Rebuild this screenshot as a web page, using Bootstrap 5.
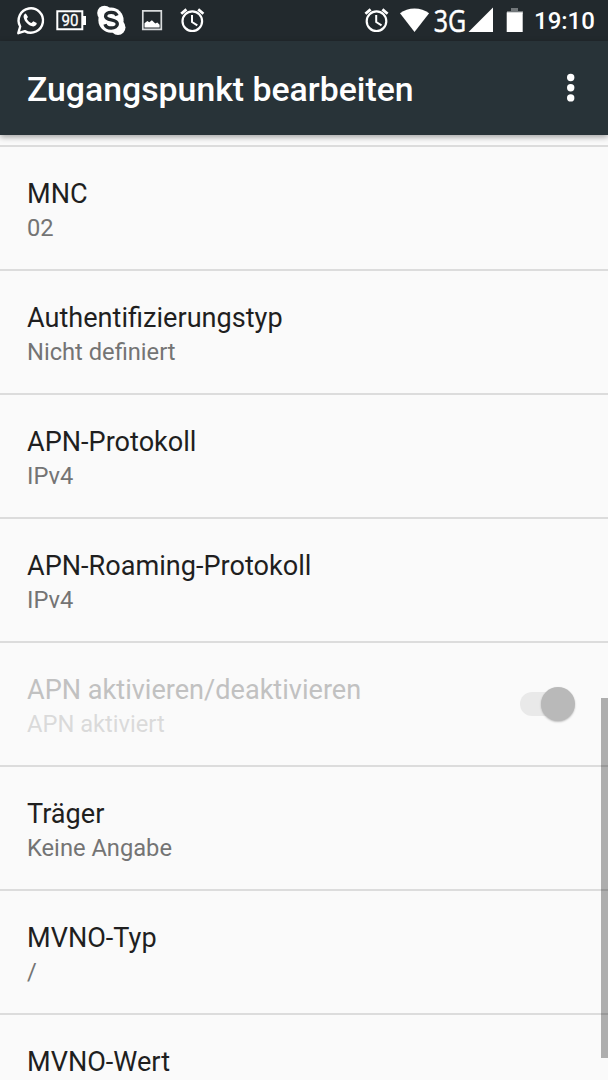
<!DOCTYPE html>
<html lang="de">
<head>
<meta charset="utf-8">
<meta name="viewport" content="width=device-width, initial-scale=1">
<title>Zugangspunkt bearbeiten</title>
<link href="https://cdn.jsdelivr.net/npm/bootstrap@5.3.0/dist/css/bootstrap.min.css" rel="stylesheet">
<style>
  body { font-family: Roboto, "Noto Sans", sans-serif; background: #fafafa; color: #1f1f1f; height: 1080px; }
  svg { display: block; flex: none; overflow: visible; }
  .statusbar { height: 41px; background: #22292d; color: #fff; padding: 0 14px 0 15px; }
  .clock { font-size: 24px; font-weight: 500; line-height: 41px; padding-top: 2px; width: 60px; margin-left: 11px; }
  .appbar { height: 94px; background: #283338; color: #fff; padding: 0 27px; box-shadow: 0 2px 6px rgba(0,0,0,.36); z-index: 2; }
  .appbar h1 { font-size: 33.8px; font-weight: 500; line-height: 40px; padding-top: 4px; white-space: nowrap; }
  .settings { padding-top: 10px; }
  .settings .pref { --bs-list-group-bg: transparent; height: 124px; padding: 31px 32px 0 27px; border: 0; border-top: 2px solid #dcdcdc; color: inherit; }
  .settings .pref:last-child { height: 67px; }
  .pref-name { font-size: 27.1px; line-height: 32px; white-space: nowrap; }
  .pref-value { font-size: 23.7px; line-height: 28px; margin-top: 4px; color: #747474; white-space: nowrap; }
  .pref-off .pref-name { color: #c1c1c1; }
  .pref-off .pref-value { color: #dadada; }
  .toggle { width: 56px; height: 36px; margin-top: 12px; }
  .toggle-track { left: 0; top: 6px; width: 44px; height: 24px; border-radius: 12px; background: #e9e9e9; }
  .toggle-thumb { right: 1px; top: 1px; width: 34px; height: 34px; background: #b9b9b9; box-shadow: 0 1px 2px rgba(0,0,0,.25); }
  .scroll-thumb { right: 0; top: 698px; width: 7px; height: 360px; background: rgba(0,0,0,.3); }
</style>
</head>
<body class="position-relative overflow-hidden d-flex flex-column">
  <header class="statusbar d-flex align-items-center flex-shrink-0">
    <svg width="30" height="41" viewBox="15 0 30 41" fill="none" stroke="#fff">
      <path d="M18.3 33.2l1.9-6.7a12.2 12.2 0 1 1 4.6 4.6z" stroke-width="2.4" stroke-linejoin="round"/>
      <path d="M25.8 13.4c-1.7.3-2.5 2.1-2.1 4.1.9 4.3 4.9 8.4 9.5 8.9 2 .1 3.8-1.5 3.5-3.3l-3.4-1.8-1.8 1.8c-2-.8-3.7-2.4-4.7-4.4l1.2-1.6z" fill="#fff" stroke="none"/>
    </svg>
    <svg width="46" height="41" viewBox="45 0 46 41">
      <path d="M57.3 11.3h25v18h-25z" fill="none" stroke="#fff" stroke-width="2"/>
      <path d="M83 16h3v9h-3z" fill="#fff"/>
      <text x="61.5" y="26.2" font-size="16.2" fill="#fff" stroke="#fff" stroke-width=".3" textLength="17" lengthAdjust="spacingAndGlyphs">90</text>
    </svg>
    <svg width="44" height="41" viewBox="91 0 44 41">
      <circle cx="111" cy="20.2" r="12.6" fill="#fff"/><circle cx="104.5" cy="13" r="7.3" fill="#fff"/><circle cx="118" cy="27.4" r="7.5" fill="#fff"/>
      <path d="M117 15.6c-.8-2.2-3-3.2-5.8-3.2-3.3 0-5.600 1.500-5.600 3.800 0 5.100 11.700 2.300 11.700 7.800 0 2.500-2.600 4-6.100 4-3.400 0-5.500-1.400-6.200-3.800" fill="none" stroke="#22292d" stroke-width="3.4"/>
    </svg>
    <svg width="40" height="41" viewBox="135 0 40 41">
      <path d="M142.8 10.8h18.5v18.5h-18.5z" fill="none" stroke="#d9dcdd" stroke-width="1.7"/>
      <path d="M144.5 27.500v-4.200l2.800-2.300 2 1.200 2.600-1.900 3.400 3.200 2-.9 2.300 2.100v2.800z" fill="#fff"/>
    </svg>
    <svg width="36" height="41" viewBox="175 0 36 41" fill="none" stroke="#fff">
      <circle cx="192.3" cy="21.2" r="9.8" stroke-width="2.2"/><path d="M192 15v7l5.3 3.3" stroke-width="2"/><path d="M181.2 13.8l5.2-4.4M203.4 13.8l-5.2-4.4" stroke-width="2.8"/>
    </svg>
    <svg class="ms-auto" width="34" height="41" viewBox="359 0 34 41" fill="none" stroke="#fff">
      <circle cx="376.500" cy="21.2" r="9.8" stroke-width="2.2"/><path d="M376.2 15v7l5.3 3.3" stroke-width="2"/><path d="M365.4 13.8l5.2-4.4M387.6 13.8l-5.2-4.4" stroke-width="2.8"/>
    </svg>
    <svg width="40" height="41" viewBox="393 0 40 41">
      <path d="M414.5 32L400 13.2C404 10.2 409 8.5 414.5 8.5s10.600 1.700 14.600 4.700z" fill="#fff"/>
    </svg>
    <svg width="34" height="41" viewBox="433 0 34 41">
      <text x="433.700" y="32" font-family="Open Sans, Noto Sans, sans-serif" font-size="30.500" fill="#fff" stroke="#fff" stroke-width=".5" textLength="32.500" lengthAdjust="spacingAndGlyphs">3G</text>
    </svg>
    <svg width="56" height="41" viewBox="467 0 56 41">
      <path d="M468.500 32L493 7.500V32z" fill="#fff"/>
      <path d="M511 8h7v3h5v3h-16v-3h4z" fill="#72777a"/>
      <path d="M506.700 12.300h16v19.700h-16z" fill="#fff"/>
    </svg>
    <div class="clock">19:10</div>
  </header>

  <nav class="appbar position-relative d-flex align-items-center justify-content-between flex-shrink-0">
    <h1 class="m-0">Zugangspunkt bearbeiten</h1>
    <svg width="20" height="34" viewBox="0 0 20 34" fill="#fff"><circle cx="9.700" cy="6.500" r="3.700"/><circle cx="9.700" cy="16.700" r="3.700"/><circle cx="9.700" cy="26.900" r="3.700"/></svg>
  </nav>

  <main class="settings list-group rounded-0">
    <div class="pref list-group-item"><div class="pref-name">MNC</div><div class="pref-value">02</div></div>
    <div class="pref list-group-item"><div class="pref-name">Authentifizierungstyp</div><div class="pref-value">Nicht definiert</div></div>
    <div class="pref list-group-item"><div class="pref-name">APN-Protokoll</div><div class="pref-value">IPv4</div></div>
    <div class="pref list-group-item"><div class="pref-name">APN-Roaming-Protokoll</div><div class="pref-value">IPv4</div></div>
    <div class="pref pref-off list-group-item d-flex justify-content-between">
      <div><div class="pref-name">APN aktivieren/deaktivieren</div><div class="pref-value">APN aktiviert</div></div>
      <div class="toggle position-relative"><span class="toggle-track position-absolute"></span><span class="toggle-thumb position-absolute rounded-circle"></span></div>
    </div>
    <div class="pref list-group-item"><div class="pref-name">Träger</div><div class="pref-value">Keine Angabe</div></div>
    <div class="pref list-group-item"><div class="pref-name">MVNO-Typ</div><div class="pref-value">/</div></div>
    <div class="pref list-group-item"><div class="pref-name">MVNO-Wert</div></div>
  </main>
  <div class="scroll-thumb position-absolute"></div>
</body>
</html>
